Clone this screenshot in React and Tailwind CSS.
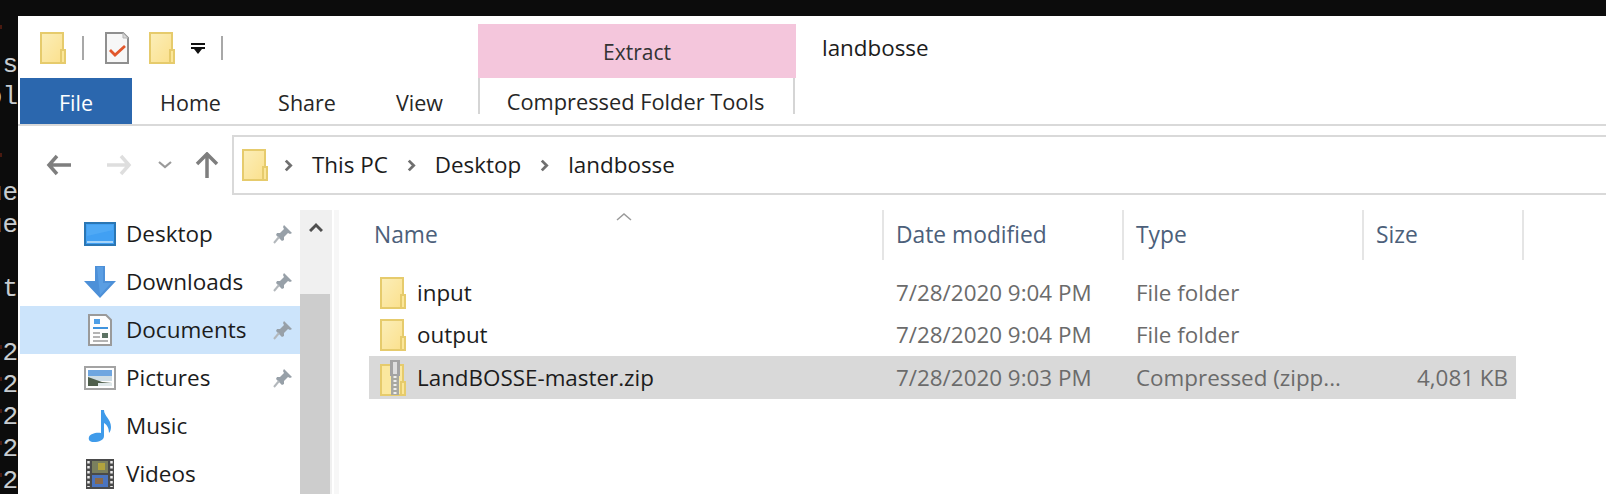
import React from "react";

// --- Icons ---

const Folder = ({ className = "" }) => (
  <svg viewBox="0 0 26 32" className={`w-[26px] h-[32px] shrink-0 ${className}`}>
    <defs>
      <linearGradient id="folderFill" x1="0" y1="0" x2="1" y2="1">
        <stop offset="0" stopColor="#fbeeb9" />
        <stop offset="1" stopColor="#fbe08c" />
      </linearGradient>
    </defs>
    <path d="M1 1H23V31H1Z" fill="url(#folderFill)" stroke="#e6cb6c" strokeWidth="2" />
    <path d="M21 18H25V31H21Z" fill="#fbe699" stroke="#e6cb6c" strokeWidth="2" />
  </svg>
);

const ZipFolder = () => (
  <svg viewBox="0 0 26 36" className="w-[26px] h-[36px] shrink-0">
    <path d="M1 5H23V35H1Z" fill="#fbe89f" stroke="#e6cb6c" strokeWidth="2" />
    <path d="M21 22H25V35H21Z" fill="#fbe699" stroke="#e6cb6c" strokeWidth="2" />
    <path d="M10 0H20V16H10Z" fill="#a3a3a3" />
    <path d="M13 2H17V14H13Z" fill="#dedede" />
    <path d="M11 16H19V35H11Z" fill="#a8a8a0" />
    <path d="M15 16V35" stroke="#efefef" strokeWidth="3" strokeDasharray="2 2" />
  </svg>
);

const CheckDoc = () => (
  <svg viewBox="0 0 24 32" className="w-[24px] h-[32px] shrink-0">
    <path d="M1 1H18L23 6V31H1Z" fill="#f7f7f7" stroke="#8f8f8f" strokeWidth="2" />
    <path d="M18 1V6H23Z" fill="#d8d8d8" stroke="#b5b5b5" strokeWidth="1" />
    <path d="M5 18L10 23L20 14" fill="none" stroke="#e2572b" strokeWidth="2.8" />
  </svg>
);

const Pin = () => (
  <svg viewBox="0 0 20 20" className="w-[20px] h-[20px]">
    <path d="M11 1L19 9L17 10L15 9L11 13L11 16L9 17L3 11L4 9L7 9L11 5L10 3Z" fill="#97a0a8" />
    <path d="M6 13L1 19" stroke="#b3b8bc" strokeWidth="2" />
  </svg>
);

const DesktopIcon = () => (
  <svg viewBox="0 0 32 24" className="w-[32px] h-[24px]">
    <rect x="1" y="1" width="30" height="22" fill="#41a0f3" stroke="#2a76b4" strokeWidth="2" />
    <path d="M3 20H29" stroke="#c9e6fb" strokeWidth="1.5" />
    <path d="M3 3H29V8L3 14Z" fill="#4fa9f5" />
  </svg>
);

const DownloadsIcon = () => (
  <svg viewBox="0 0 32 32" className="w-[32px] h-[32px]">
    <path d="M11 0H21V15H32L16 32L0 15H11Z" fill="#4d90d8" />
    <path d="M13 1H19V17H27L16 29Z" fill="#5a9ee3" />
  </svg>
);

const DocumentsIcon = () => (
  <svg viewBox="0 0 24 32" className="w-[24px] h-[32px]">
    <path d="M1 1H18L23 6V31H1Z" fill="#fdfdfd" stroke="#9a9a9a" strokeWidth="2" />
    <path d="M6 5H12V10H6Z" fill="#4f9fe6" />
    <path d="M5 14H20" stroke="#3f93dd" strokeWidth="2" />
    <path d="M5 19H12M5 23H12M5 27H20" stroke="#9a9a9a" strokeWidth="1.5" />
    <path d="M14 19H20V24H14Z" fill="#5c7263" />
  </svg>
);

const PicturesIcon = () => (
  <svg viewBox="0 0 32 24" className="w-[32px] h-[24px]">
    <rect x="1" y="1" width="30" height="22" fill="#fff" stroke="#a3a3a3" strokeWidth="2" />
    <rect x="4" y="4" width="24" height="6" fill="#6fa6e0" />
    <rect x="4" y="10" width="24" height="5" fill="#cfdde4" />
    <path d="M4 11L18 16L28 17V20H4Z" fill="#4f5f4c" />
    <path d="M14 17H28V20H14Z" fill="#dfe8ea" />
  </svg>
);

const MusicIcon = () => (
  <svg viewBox="0 0 24 32" className="w-[24px] h-[32px]">
    <path d="M13 0H16C16 6 23 9 23 17C23 20 22 22 21 23C21 17 18 14 16 13V26C16 30 11 32 6 32C2 32 0 30 1 27C2 24 8 22 13 23Z" fill="#3f9bea" />
  </svg>
);

const VideosIcon = () => (
  <svg viewBox="0 0 28 30" className="w-[28px] h-[30px]">
    <rect x="0" y="0" width="28" height="30" fill="#4a4a4a" />
    <path d="M2.5 2V28M25.5 2V28" stroke="#eeeeee" strokeWidth="2.5" strokeDasharray="2.5 2.5" />
    <rect x="6" y="2" width="16" height="12" fill="#7a7f5e" />
    <rect x="6" y="16" width="16" height="12" fill="#4b74bf" />
    <path d="M12 4H19V11H12Z" fill="#b2a33e" />
    <path d="M9 19H17V25H9Z" fill="#8a6a4a" />
  </svg>
);

// --- Small chrome ---

const Separator = () => <div className="w-[2px] h-[24px] bg-[#a8a8a8] shrink-0"></div>;

const Crumb = () => (
  <svg viewBox="0 0 8 12" className="w-[9px] h-[13px] shrink-0">
    <path d="M1.5 1.5L6 6L1.5 10.5" fill="none" stroke="#6f6f6f" strokeWidth="2.6" />
  </svg>
);

const NavItem = ({ icon, label, pinned, active }) => (
  <div className={`flex items-center h-[48px] ${active ? "bg-[#cce4fb]" : ""}`}>
    <div className="w-[96px] shrink-0 flex justify-end">
      <div className="w-[32px] flex justify-center">{icon}</div>
    </div>
    <span className="ml-[10px] text-[22.5px] text-[#1c1c1c] flex-1">{label}</span>
    {pinned && (
      <div className="mr-[7px]">
        <Pin />
      </div>
    )}
  </div>
);

const navItems = [
  { label: "Desktop", icon: <DesktopIcon />, pinned: true },
  { label: "Downloads", icon: <DownloadsIcon />, pinned: true },
  { label: "Documents", icon: <DocumentsIcon />, pinned: true, active: true },
  { label: "Pictures", icon: <PicturesIcon />, pinned: true },
  { label: "Music", icon: <MusicIcon /> },
  { label: "Videos", icon: <VideosIcon /> },
];

const files = [
  { name: "input", date: "7/28/2020 9:04 PM", type: "File folder", size: "" },
  { name: "output", date: "7/28/2020 9:04 PM", type: "File folder", size: "" },
  { name: "LandBOSSE-master.zip", date: "7/28/2020 9:03 PM", type: "Compressed (zipp...", size: "4,081 KB", zip: true },
];

// one entry per console row, only the last characters show beside the window
const termLines = [
  { text: "", tick: true },
  { text: ".s" },
  { text: "ol" },
  { text: "" },
  { text: "", tick: true },
  { text: "ue" },
  { text: "ue" },
  { text: "" },
  { text: ":t" },
  { text: "" },
  { text: "2", tick: true },
  { text: "2", tick: true },
  { text: "2", tick: true },
  { text: "2", tick: true },
  { text: "2", tick: true },
];

const TermLine = ({ text, tick }) => (
  <div className="relative h-[32px] flex justify-end whitespace-pre">
    {tick && <span className="absolute left-0 top-[8px] w-[2px] h-[4px] bg-[#4a1a10]"></span>}
    {text}
  </div>
);

export default function App() {
  return (
    <div className="w-[1606px] h-[494px] overflow-hidden bg-[#0c0c0c] flex font-['Open_Sans',sans-serif]">
      {/* terminal sliver behind the window */}
      <div className="w-[18px] shrink-0 overflow-hidden pt-[17px] font-['Liberation_Mono',monospace] text-[26px] leading-[32px] text-[#c8ccd0]">
        {termLines.map((line, i) => (
          <TermLine key={i} {...line} />
        ))}
      </div>

      <div className="flex-1 mt-[16px] bg-white flex flex-col min-w-0">
        {/* quick access + contextual tab header */}
        <div className="h-[62px] flex pl-[22px] shrink-0">
          <div className="flex items-center w-[438px] pt-[1px]">
            <Folder />
            <div className="ml-[16px]">
              <Separator />
            </div>
            <div className="ml-[21px]">
              <CheckDoc />
            </div>
            <div className="ml-[20px]">
              <Folder />
            </div>
            <svg viewBox="0 0 14 12" className="ml-[16px] w-[14px] h-[12px]">
              <path d="M0 1H14V3H0Z M0 5H14V7H0Z" fill="#111" />
              <path d="M3 7H11L7 12Z" fill="#111" />
            </svg>
            <div className="ml-[16px]">
              <Separator />
            </div>
          </div>
          <div className="mt-[8px] pt-[3px] w-[318px] bg-[#f4c6dc] flex items-center justify-center text-[21px] text-[#333]">
            Extract
          </div>
          <div className="ml-[26px] mt-[15px] text-[22.4px] text-[#1c1c1c]">landbosse</div>
        </div>

        {/* ribbon tabs */}
        <div className="h-[48px] flex items-stretch border-b-2 border-[#d9d9d9] shrink-0 text-[21.5px]">
          <div className="ml-[2px] w-[112px] pt-[5px] bg-[#2b67ae] text-white flex items-center justify-center">
            File
          </div>
          <div className="w-[116px] pl-[1px] pt-[5px] flex items-center justify-center text-[#262626]">Home</div>
          <div className="w-[117px] pl-[1px] pt-[5px] flex items-center justify-center text-[#262626]">Share</div>
          <div className="w-[113px] pt-[5px] pr-[4px] flex items-center justify-center text-[#262626]">View</div>
          <div className="w-[317px] h-[36px] border-x-2 border-[#d5d5d5] pt-[8px] pr-[2px] text-center text-[21.8px] text-[#262626] leading-[32px]">
            Compressed Folder Tools
          </div>
        </div>

        {/* address bar */}
        <div className="h-[78px] flex items-center shrink-0">
          <svg viewBox="0 0 26 22" className="ml-[28px] w-[26px] h-[22px]">
            <path d="M11 2L3 11L11 20M3 11H25" fill="none" stroke="#7e7e7e" strokeWidth="3.5" />
          </svg>
          <svg viewBox="0 0 26 22" className="ml-[34px] w-[26px] h-[22px]">
            <path d="M15 2L23 11L15 20M1 11H23" fill="none" stroke="#dedede" strokeWidth="3.5" />
          </svg>
          <svg viewBox="0 0 14 8" className="ml-[26px] w-[14px] h-[8px]">
            <path d="M1 1L7 6L13 1" fill="none" stroke="#9a9a9a" strokeWidth="2.2" />
          </svg>
          <svg viewBox="0 0 24 26" className="ml-[23px] w-[24px] h-[26px]">
            <path d="M2 12L12 2L22 12M12 2V26" fill="none" stroke="#7e7e7e" strokeWidth="3.5" />
          </svg>
          <div className="ml-[13px] flex-1 h-[60px] border-y-2 border-l-2 border-[#d9d9d9] flex items-center pl-[8px] gap-[19px] text-[22.4px] text-[#1c1c1c]">
            <Folder className="-mr-[3px]" />
            <Crumb />
            <span>This PC</span>
            <Crumb />
            <span>Desktop</span>
            <Crumb />
            <span>landbosse</span>
          </div>
        </div>

        {/* body */}
        <div className="flex-1 flex min-h-0 mt-[6px]">
          {/* nav pane */}
          <div className="w-[280px] shrink-0 ml-[2px]">
            {navItems.map((item) => (
              <NavItem key={item.label} {...item} />
            ))}
          </div>
          {/* scrollbar */}
          <div className="w-[32px] shrink-0 bg-[#f0f0f0] flex flex-col">
            <div className="h-[84px] flex justify-center pt-[12px]">
              <svg viewBox="0 0 14 10" className="w-[14px] h-[10px]">
                <path d="M1 9L7 3L13 9" fill="none" stroke="#4f4f4f" strokeWidth="3" />
              </svg>
            </div>
            <div className="flex-1 w-[30px] bg-[#cdcdcd]"></div>
          </div>
          <div className="w-[5px] shrink-0 bg-[#f7f7f7] ml-[2px]"></div>

          {/* details view */}
          <div className="flex-1 min-w-0 pl-[30px]">
            <div className="relative h-[50px] flex items-center text-[22.8px] text-[#4c607a]">
              <svg viewBox="0 0 16 8" className="absolute left-[247px] top-[3px] w-[16px] h-[8px]">
                <path d="M1 7L8 1L15 7" fill="none" stroke="#9a9a9a" strokeWidth="1.5" />
              </svg>
              <div className="w-[513px] pl-[5px]">Name</div>
              <div className="w-[240px] h-full flex items-center pl-[12px] border-l-2 border-[#e5e5e5]">Date modified</div>
              <div className="w-[240px] h-full flex items-center pl-[12px] border-l-2 border-[#e5e5e5]">Type</div>
              <div className="w-[162px] h-full flex items-center pl-[12px] border-x-2 border-[#e5e5e5]">Size</div>
            </div>
            <div className="mt-[12px] w-[1147px]">
              {files.map((f) => (
                <div
                  key={f.name}
                  className={`flex items-center text-[22.4px] ${f.zip ? "h-[43px] bg-[#d9d9d9]" : "h-[42px]"}`}
                >
                  <div className="w-[513px] flex items-center pl-[11px] gap-[11px] text-[#1c1c1c]">
                    {f.zip ? <ZipFolder /> : <Folder />}
                    <span>{f.name}</span>
                  </div>
                  <div className="w-[240px] pl-[14px] text-[#6b6b6b]">{f.date}</div>
                  <div className="w-[220px] pl-[14px] text-[#6b6b6b]">{f.type}</div>
                  <div className="flex-1 pr-[8px] text-right text-[#6b6b6b]">{f.size}</div>
                </div>
              ))}
            </div>
          </div>
        </div>
      </div>
    </div>
  );
}
